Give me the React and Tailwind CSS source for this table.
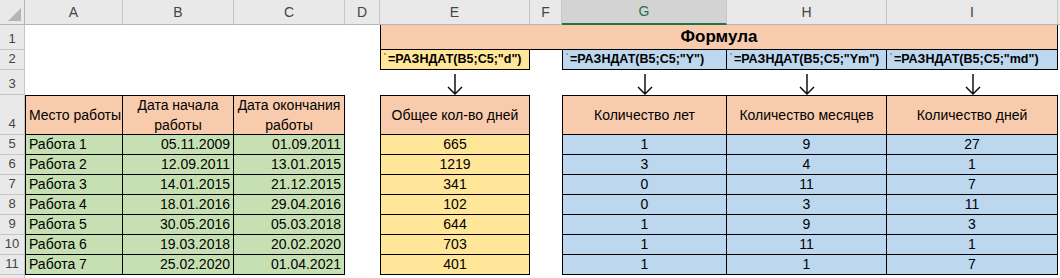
import React from 'react';

const COLS = ['A', 'B', 'C', 'D', 'E', 'F', 'G', 'H', 'I'];

const rows = [
  ['Работа 1', '05.11.2009', '01.09.2011', 665, 1, 9, 27],
  ['Работа 2', '12.09.2011', '13.01.2015', 1219, 3, 4, 1],
  ['Работа 3', '14.01.2015', '21.12.2015', 341, 0, 11, 7],
  ['Работа 4', '18.01.2016', '29.04.2016', 102, 0, 3, 11],
  ['Работа 5', '30.05.2016', '05.03.2018', 644, 1, 9, 3],
  ['Работа 6', '19.03.2018', '20.02.2020', 703, 1, 11, 1],
  ['Работа 7', '25.02.2020', '01.04.2021', 401, 1, 1, 7],
];

const RowHead = ({ n }) => (
  <div className="bg-[#e9e9e9] border-r border-b border-[#c6c6c6] flex items-end justify-center pb-[1px] text-[13px] text-[#444]">
    {n}
  </div>
);

const Cell = ({ wrap = false, className = '', children }) => (
  <div className={`flex items-center overflow-hidden border-black ${wrap ? 'whitespace-normal text-center' : 'whitespace-nowrap'} ${className}`}>
    {children}
  </div>
);

const Formula = ({ text, className = '' }) => (
  <Cell className={`relative pl-[7px] font-bold text-[12.5px] ${className}`}>
    <span className="absolute left-[3px] top-[3px] w-[2px] h-[2px] bg-[#a0a0a0]" />
    {text}
  </Cell>
);

const Arrow = () => (
  <div className="flex justify-center items-end">
    <svg width="16" height="21" viewBox="0 0 16 21" fill="none" stroke="#000" strokeWidth="1.4">
      <line x1="8" y1="0" x2="8" y2="20" />
      <polyline points="1,13 8,20 15,13" />
    </svg>
  </div>
);

export default function App() {
  return (
    <div
      className="w-[1060px] h-[278px] overflow-hidden bg-white text-black grid grid-cols-[25px_98px_111px_111px_35px_150px_32px_165px_160px_171px_2px] grid-rows-[25px_25px_20px_25px_40px_repeat(7,20px)_3px]"
      style={{ fontFamily: '"Liberation Sans", Arial, sans-serif' }}
    >
      {/* header row */}
      <div className="bg-[#e9e9e9] border-r border-b border-[#b5b5b5] relative">
        <div className="absolute right-[3px] bottom-[3px] w-0 h-0 border-l-[13px] border-l-transparent border-b-[13px] border-b-[#b4b4b4]" />
      </div>
      {COLS.map((c) =>
        c === 'G' ? (
          <div key={c} className="bg-[#d3d3d3] border-r border-[#c6c6c6] border-b-2 border-b-[#217346] flex items-center justify-center text-[14px] text-[#217346]">
            {c}
          </div>
        ) : (
          <div key={c} className="bg-[#e9e9e9] border-r border-b border-[#c6c6c6] border-b-[#b5b5b5] flex items-center justify-center text-[14px] text-[#444]">
            {c}
          </div>
        )
      )}
      <div className="bg-[#e9e9e9] border-b border-[#b5b5b5]" />

      {/* row 1 */}
      <RowHead n={1} />
      <div /><div /><div /><div />
      <Cell className="col-span-5 bg-[#f8cbad] border-l border-r border-b justify-center font-bold text-[17px]">Формула</Cell>
      <div />

      {/* row 2 */}
      <RowHead n={2} />
      <div /><div /><div /><div />
      <Formula text={'=РАЗНДАТ(B5;C5;"d")'} className="bg-[#ffe699] border-l border-r border-b" />
      <div />
      <Formula text={'=РАЗНДАТ(B5;C5;"Y")'} className="bg-[#bdd7ee] border-l border-r border-b" />
      <Formula text={'=РАЗНДАТ(B5;C5;"Ym")'} className="bg-[#bdd7ee] border-r border-b" />
      <Formula text={'=РАЗНДАТ(B5;C5;"md")'} className="bg-[#bdd7ee] border-r border-b" />
      <div />

      {/* row 3 */}
      <RowHead n={3} />
      <div /><div /><div /><div />
      <Arrow />
      <div />
      <Arrow />
      <Arrow />
      <Arrow />
      <div />

      {/* row 4 */}
      <RowHead n={4} />
      <Cell className="bg-[#f8cbad] border px-[3px] text-[14px]">Место работы</Cell>
      <Cell wrap className="bg-[#f8cbad] border-t border-r border-b justify-center leading-[20px] text-[14px]">Дата начала работы</Cell>
      <Cell wrap className="bg-[#f8cbad] border-t border-r border-b justify-center leading-[20px] text-[14px]">Дата окончания работы</Cell>
      <div />
      <Cell className="bg-[#f8cbad] border justify-center text-[14px]">Общее кол-во дней</Cell>
      <div />
      <Cell className="bg-[#f8cbad] border justify-center text-[14px]">Количество лет</Cell>
      <Cell className="bg-[#f8cbad] border-t border-r border-b justify-center text-[14px]">Количество месяцев</Cell>
      <Cell className="bg-[#f8cbad] border-t border-r border-b justify-center text-[14px]">Количество дней</Cell>
      <div />

      {/* data rows */}
      {rows.map((r, i) => (
        <React.Fragment key={i}>
          <RowHead n={i + 5} />
          <Cell className="bg-[#c6e0b4] border-l border-r border-b px-[3px] text-[14px]">{r[0]}</Cell>
          <Cell className="bg-[#c6e0b4] border-r border-b justify-end px-[3px] text-[14px]">{r[1]}</Cell>
          <Cell className="bg-[#c6e0b4] border-r border-b justify-end px-[3px] text-[14px]">{r[2]}</Cell>
          <div />
          <Cell className="bg-[#ffe699] border-l border-r border-b justify-center text-[14px]">{r[3]}</Cell>
          <div />
          <Cell className="bg-[#bdd7ee] border-l border-r border-b justify-center text-[14px]">{r[4]}</Cell>
          <Cell className="bg-[#bdd7ee] border-r border-b justify-center text-[14px]">{r[5]}</Cell>
          <Cell className="bg-[#bdd7ee] border-r border-b justify-center text-[14px]">{r[6]}</Cell>
          <div />
        </React.Fragment>
      ))}

      {/* row 12 (cut off) */}
      <div className="bg-[#e9e9e9] border-r border-[#c6c6c6]" />
    </div>
  );
}
